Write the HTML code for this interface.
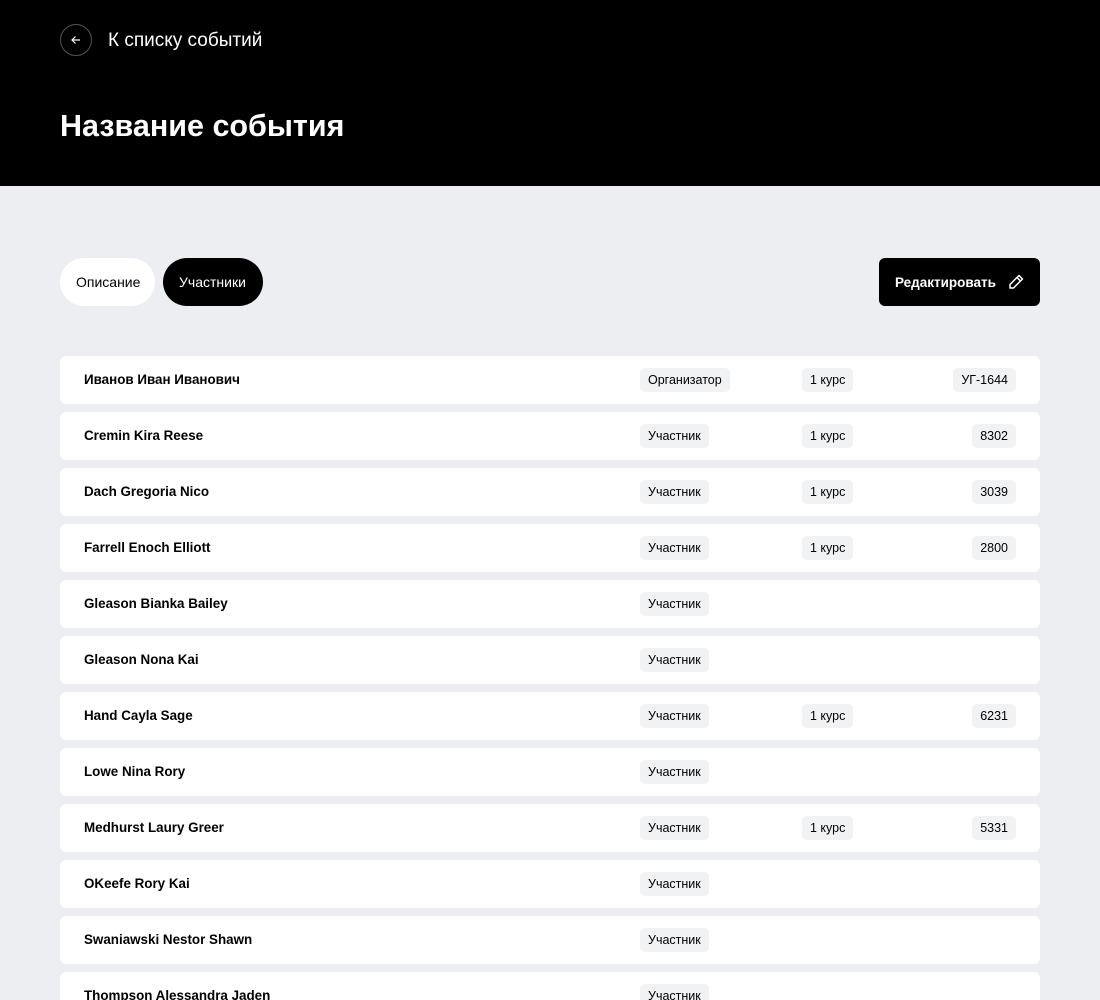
<!DOCTYPE html>
<html><head><meta charset="utf-8"><style>
*{box-sizing:border-box;margin:0;padding:0}
html,body{width:1100px;height:1000px;overflow:hidden}
body{background:#edeef2;font-family:"Liberation Sans","Noto Sans CJK JP",sans-serif;color:#000;position:relative}
.hdr{background:#000;height:186px;position:relative;color:#fff}
.back{position:absolute;left:60px;top:24px;width:32px;height:32px;border:1px solid #555;border-radius:50%}
.back svg{position:absolute;left:9px;top:9px}
.bt{position:absolute;left:108px;top:30px;font-size:19px;color:#fff}
h1{position:absolute;left:60px;top:109px;font-size:30.5px;font-weight:bold}
.tab{position:absolute;top:258px;height:48px;border-radius:24px;font-size:14px;line-height:48px;padding:0 16px}
.t1{left:60px;background:#fff;width:95px}
.t2{left:163px;background:#000;color:#fff;width:100px}
.edit{position:absolute;left:879px;top:258px;width:161px;height:48px;background:#000;color:#fff;border-radius:6px;font-size:13.5px;font-weight:bold;line-height:50px;padding-left:16px}
.edit svg{position:absolute;left:128px;top:15px}
.row{position:absolute;left:60px;width:980px;height:48px;background:#fff;border-radius:6px}
.nm{position:absolute;left:24px;top:16px;font-size:13.4px;font-weight:bold}
.tag{position:absolute;top:12px;height:24px;line-height:24px;padding:0 8px;background:#f1f2f4;border-radius:5px;font-size:12.5px}
.r{left:580px}.c{left:742px}.n{right:24px}
</style></head><body>
<div class="hdr">
<div class="back"><svg width="12" height="12" viewBox="0 0 12 12" fill="none" stroke="#fff" stroke-width="1.2"><path d="M10 6H2M5.5 2.5L2 6l3.5 3.5"/></svg></div>
<div class="bt">К списку событий</div>
<h1>Название события</h1>
</div>
<div class="tab t1">Описание</div>
<div class="tab t2">Участники</div>
<div class="edit">Редактировать<svg width="18" height="18" viewBox="0 0 18 18" fill="none" stroke="#fff" stroke-width="1.5" stroke-linejoin="round"><path d="M12 2.5l3.5 3.5L6.5 15H3v-3.5z M10 4.5l3.5 3.5"/></svg></div>

<div class="row" style="top:356px"><div class="nm">Иванов Иван Иванович</div><div class="tag r">Организатор</div><div class="tag c">1 курс</div><div class="tag n">УГ-1644</div></div>
<div class="row" style="top:412px"><div class="nm">Cremin Kira Reese</div><div class="tag r">Участник</div><div class="tag c">1 курс</div><div class="tag n">8302</div></div>
<div class="row" style="top:468px"><div class="nm">Dach Gregoria Nico</div><div class="tag r">Участник</div><div class="tag c">1 курс</div><div class="tag n">3039</div></div>
<div class="row" style="top:524px"><div class="nm">Farrell Enoch Elliott</div><div class="tag r">Участник</div><div class="tag c">1 курс</div><div class="tag n">2800</div></div>
<div class="row" style="top:580px"><div class="nm">Gleason Bianka Bailey</div><div class="tag r">Участник</div></div>
<div class="row" style="top:636px"><div class="nm">Gleason Nona Kai</div><div class="tag r">Участник</div></div>
<div class="row" style="top:692px"><div class="nm">Hand Cayla Sage</div><div class="tag r">Участник</div><div class="tag c">1 курс</div><div class="tag n">6231</div></div>
<div class="row" style="top:748px"><div class="nm">Lowe Nina Rory</div><div class="tag r">Участник</div></div>
<div class="row" style="top:804px"><div class="nm">Medhurst Laury Greer</div><div class="tag r">Участник</div><div class="tag c">1 курс</div><div class="tag n">5331</div></div>
<div class="row" style="top:860px"><div class="nm">OKeefe Rory Kai</div><div class="tag r">Участник</div></div>
<div class="row" style="top:916px"><div class="nm">Swaniawski Nestor Shawn</div><div class="tag r">Участник</div></div>
<div class="row" style="top:972px"><div class="nm">Thompson Alessandra Jaden</div><div class="tag r">Участник</div></div>
</body></html>
